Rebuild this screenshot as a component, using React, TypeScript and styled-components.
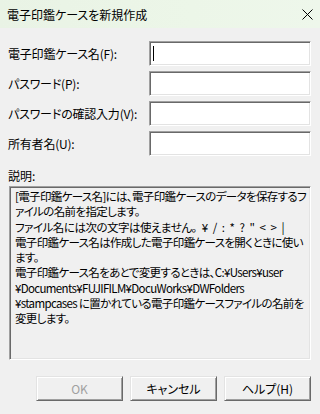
import styled, { createGlobalStyle } from 'styled-components';

const GlobalStyle = createGlobalStyle`
  html, body {
    margin: 0;
    padding: 0;
    background: #f0f0f0;
  }
  body {
    font-family: "Noto Sans CJK JP", "Noto Sans", sans-serif;
    font-size: 12px;
    color: #000;
    font-feature-settings: "palt";
  }
`;

const Window = styled.div`
  width: 320px;
  height: 414px;
  display: flex;
  flex-direction: column;
  background: #f0f0f0;
  overflow: hidden;
`;

const TitleBar = styled.div`
  height: 28px;
  flex-shrink: 0;
  display: flex;
  align-items: center;
  justify-content: space-between;
  padding: 0 5px 0 7px;
  background: linear-gradient(90deg, #e9f3e5 0%, #ecf6e8 60%, #eef7eb 100%);
  font-size: 12px;
`;

const CloseButton = styled.div`
  width: 16px;
  height: 16px;
  display: flex;
  align-items: center;
  justify-content: center;
`;

const Body = styled.div`
  display: flex;
  flex-direction: column;
  padding: 13px 9px 10px 8px;
  flex: 1;
`;

const FormGrid = styled.div`
  display: grid;
  grid-template-columns: 141px 162px;
  grid-auto-rows: 25px;
  row-gap: 5px;
  align-items: center;
`;

const Label = styled.div`
  font-size: 12px;
  white-space: nowrap;
  letter-spacing: -0.2px;
`;

const Field = styled.div`
  height: 25px;
  box-sizing: border-box;
  background: #fff;
  border-style: solid;
  border-width: 1px;
  border-color: #a0a0a0 #fff #fff #a0a0a0;
  box-shadow: inset 1px 1px 0 #696969, inset -1px -1px 0 #e3e3e3;
  display: flex;
  align-items: center;
  padding-left: 3px;
`;

const Caret = styled.span`
  width: 1px;
  height: 15px;
  background: #000;
`;

const DescLabel = styled.div`
  margin-top: 10px;
  height: 20px;
  line-height: 20px;
  font-size: 12px;
`;

const DescBox = styled.div`
  margin-left: 1px;
  width: 302px;
  height: 174px;
  box-sizing: border-box;
  border-style: solid;
  border-width: 1px;
  border-color: #a0a0a0 #fff #fff #a0a0a0;
  box-shadow: inset 1px 1px 0 #696969, inset -1px -1px 0 #e3e3e3;
  padding: 2px 2px 0 5px;
  font-size: 11.5px;
  line-height: 15.3px;
  overflow: hidden;
`;

const DescLine = styled.div<{ $spaced?: boolean }>`
  white-space: pre;
  letter-spacing: ${(p) => (p.$spaced ? '-0.5px' : '-0.65px')};
  word-spacing: ${(p) => (p.$spaced ? '3px' : '0')};
`;

const ButtonRow = styled.div`
  margin-top: 16px;
  display: flex;
  justify-content: flex-end;
  gap: 7px;
`;

const DialogButton = styled.div<{ $disabled?: boolean }>`
  width: 87px;
  height: 25px;
  box-sizing: border-box;
  background: #f0f0f0;
  border-style: solid;
  border-width: 1px;
  border-color: #e3e3e3 #696969 #696969 #e3e3e3;
  box-shadow: inset 1px 1px 0 #fff, inset -1px -1px 0 #a0a0a0;
  display: flex;
  align-items: center;
  justify-content: center;
  font-size: 12px;
  color: ${(p) => (p.$disabled ? '#a0a0a0' : '#000')};
`;

const fields = [
  { label: '電子印鑑ケース名(F):', focused: true },
  { label: 'パスワード(P):' },
  { label: 'パスワードの確認入力(V):' },
  { label: '所有者名(U):' },
];

const description = [
  '[電子印鑑ケース名]には、電子印鑑ケースのデータを保存するフ',
  'ァイルの名前を指定します。',
  'ファイル名には次の文字は使えません。 ¥ / : * ? " < > |',
  '電子印鑑ケース名は作成した電子印鑑ケースを開くときに使い',
  'ます。',
  '電子印鑑ケース名をあとで変更するときは、C:¥Users¥user',
  '¥Documents¥FUJIFILM¥DocuWorks¥DWFolders',
  '¥stampcases に置かれている電子印鑑ケースファイルの名前を',
  '変更します。',
];

function App() {
  return (
    <Window>
      <GlobalStyle />
      <TitleBar>
        <span>電子印鑑ケースを新規作成</span>
        <CloseButton>
          <svg width="11" height="11" viewBox="0 0 11 11">
            <path d="M0.5 0.5 L10.5 10.5 M10.5 0.5 L0.5 10.5" stroke="#000" strokeWidth="1" />
          </svg>
        </CloseButton>
      </TitleBar>
      <Body>
        <FormGrid>
          {fields.map((f) => [
            <Label key={f.label}>{f.label}</Label>,
            <Field key={f.label + '-field'}>{f.focused && <Caret />}</Field>,
          ])}
        </FormGrid>
        <DescLabel>説明:</DescLabel>
        <DescBox>
          {description.map((line, i) => (
            <DescLine key={i} $spaced={i === 2}>
              {line}
            </DescLine>
          ))}
        </DescBox>
        <ButtonRow>
          <DialogButton $disabled>OK</DialogButton>
          <DialogButton>キャンセル</DialogButton>
          <DialogButton>ヘルプ(H)</DialogButton>
        </ButtonRow>
      </Body>
    </Window>
  );
}

export default App;
